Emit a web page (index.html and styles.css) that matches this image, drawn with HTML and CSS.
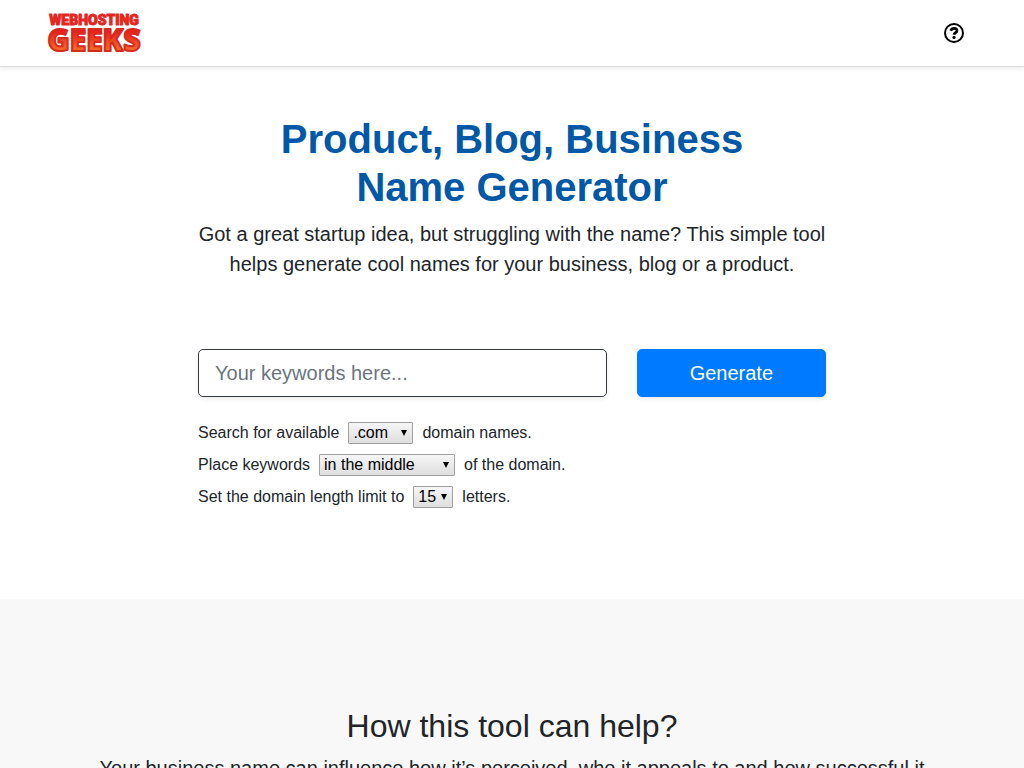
FILE: index.html
```html
<!DOCTYPE html>
<html lang="en">
<head>
    <meta charset="UTF-8">
    <meta name="viewport" content="width=device-width, initial-scale=1.0">
    <title>Product, Blog, Business Name Generator</title>
    <link rel="stylesheet" href="styles.css">
</head>
<body>

<header class="navbar">
    <a class="brand" href="#" aria-label="Webhosting Geeks">
        <svg width="96" height="44" viewBox="0 0 96 44">
            <defs>
                <linearGradient id="fire" x1="0" y1="0" x2="0" y2="1">
                    <stop offset="0.3" stop-color="#ea201c"/>
                    <stop offset="0.8" stop-color="#f4702a"/>
                </linearGradient>
            </defs>
            <text class="logo-top" x="48" y="14" text-anchor="middle">WEBHOSTING</text>
            <text class="logo-main" x="48" y="40" text-anchor="middle" fill="url(#fire)">GEEKS</text>
        </svg>
    </a>
    <a class="help" href="#help" aria-label="Help">
        <svg width="20" height="20" viewBox="0 0 20 20" fill="none" stroke="#000">
            <circle cx="10" cy="10" r="9" stroke-width="2"/>
            <path d="M6.700 7.800C7.300 6.200 8.400 5.400 10 5.400c1.700 0 3 .9 3 2.400 0 2-2.900 1.900-2.900 3.900" stroke-width="2.700"/>
            <circle cx="10" cy="14.400" r="1.600" fill="#000" stroke="none"/>
        </svg>
    </a>
</header>

<main>
    <section class="hero">
        <h1>Product, Blog, Business<br>Name Generator</h1>
        <p class="lead">Got a great startup idea, but struggling with the name? This simple tool helps generate cool names for your business, blog or a product.</p>

        <form class="generator">
            <div class="search-row">
                <input class="keywords" type="text" placeholder="Your keywords here..." aria-label="Keywords">
                <button class="generate" type="submit">Generate</button>
            </div>
            <div class="option">
                <label for="tld">Search for available</label>
                <span class="select select-tld">
                    <select id="tld">
                        <option>.com</option>
                        <option>.net</option>
                        <option>.org</option>
                    </select>
                </span>
                <span>domain names.</span>
            </div>
            <div class="option">
                <label for="position">Place keywords</label>
                <span class="select select-position">
                    <select id="position">
                        <option>in the middle</option>
                        <option>at the beginning</option>
                        <option>at the end</option>
                    </select>
                </span>
                <span>of the domain.</span>
            </div>
            <div class="option">
                <label for="limit">Set the domain length limit to</label>
                <span class="select select-limit">
                    <select id="limit">
                        <option>15</option>
                        <option>20</option>
                        <option>25</option>
                    </select>
                </span>
                <span>letters.</span>
            </div>
        </form>
    </section>

    <section class="about" id="help">
        <h2>How this tool can help?</h2>
        <p>Your business name can influence how it’s perceived, who it appeals to and how successful it</p>
    </section>
</main>

</body>
</html>
```
FILE: styles.css
```css
* {
    box-sizing: border-box;
}
body {
    margin: 0;
    font-family: "Liberation Sans", Arial, sans-serif;
    font-size: 16px;
    line-height: 24px;
    color: #212529;
    background: #fff;
}
h1, h2, p {
    margin: 0;
}

/* top bar */
.navbar {
    display: flex;
    justify-content: space-between;
    align-items: center;
    padding: 11px 60px 11px 46px;
    background: #fff;
    border-bottom: 1px solid #dcdcdc;
    box-shadow: 0 2px 4px rgba(0, 0, 0, 0.07);
}
.brand, .help, .brand svg, .help svg {
    display: block;
}
.brand svg {
    overflow: visible;
}
.logo-top, .logo-main {
    stroke-width: 1px;
    stroke-linejoin: round;
}
.logo-top {
    font-family: Roboto, sans-serif;
    font-weight: 900;
    font-size: 14px;
    fill: #e3261f;
    stroke: #e3261f;
}
.logo-main {
    font-family: "Open Sans", sans-serif;
    font-weight: 800;
    font-size: 30px;
    stroke: #d62c1e;
    stroke-width: 2px;
}

/* generator */
.hero {
    max-width: 660px;
    margin: 0 auto;
    padding: 48px 16px 86px;
}
.hero h1 {
    font-size: 40px;
    line-height: 48px;
    font-weight: 700;
    text-align: center;
    color: #0058a6;
}
.lead {
    margin-top: 8px;
    font-size: 20px;
    line-height: 30px;
    text-align: center;
}
.generator {
    margin-top: 70px;
}
.search-row {
    display: grid;
    grid-template-columns: 1fr 1fr 1fr;
    gap: 30px;
    margin-bottom: 20px;
}
.keywords, .generate {
    height: 48px;
    padding: 8px 16px;
    font-family: inherit;
    font-size: 20px;
    line-height: 30px;
    border-radius: 5px;
    box-shadow: 0 2px 4px rgba(0, 0, 0, 0.08);
}
.keywords {
    grid-column: span 2;
    width: 100%;
    color: #495057;
    background: #fff;
    border: 1px solid #343a40;
}
.keywords::placeholder {
    color: #6c757d;
    opacity: 1;
}
.generate {
    color: #fff;
    background: #007bff;
    border: 1px solid #007bff;
    cursor: pointer;
}
.option {
    display: flex;
    align-items: center;
    gap: 9px;
    height: 32px;
}
.select {
    position: relative;
}
.select::after {
    content: "";
    position: absolute;
    top: 8px;
    right: 6px;
    border: 3px solid transparent;
    border-top: 6px solid #000;
    border-bottom: 0;
    pointer-events: none;
}
.select select {
    display: block;
    width: 100%;
    height: 22px;
    padding: 0 4px;
    font-family: inherit;
    font-size: 16px;
    line-height: 20px;
    color: #000;
    background: linear-gradient(#f6f6f6, #dedede);
    border: 1px solid #a0a0a0;
    border-radius: 1px;
    appearance: none;
}
.select-tld {
    width: 65px;
}
.select-position {
    width: 136px;
}
.select-limit {
    width: 40px;
}

/* how it works */
.about {
    padding: 108px 60px;
    text-align: center;
    background: #f8f8f8;
}
.about h2 {
    margin-bottom: 8px;
    font-size: 32px;
    line-height: 38px;
    font-weight: 400;
}
.about p {
    font-size: 20px;
    line-height: 30px;
}
```
